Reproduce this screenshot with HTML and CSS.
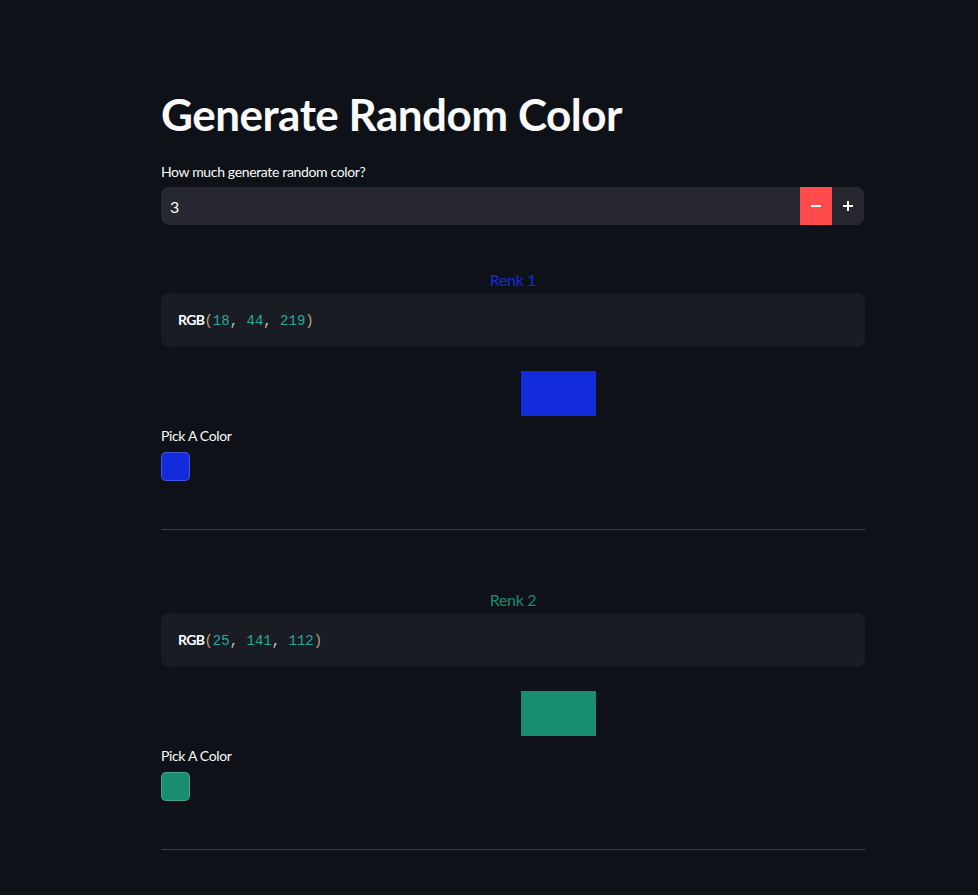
FILE: index.html
```html
<!DOCTYPE html>
<html lang="en">
<head>
<meta charset="utf-8">
<title>Generate Random Color</title>
<link rel="stylesheet" href="styles.css">
</head>
<body>
<main class="block">
  <h1 class="title">Generate Random Color</h1>
  <label class="label">How much generate random color?</label>
  <div class="number-input">
    <span class="number-value">3</span>
    <button class="step step-minus" aria-label="minus"><svg width="10" height="10" viewBox="0 0 10 10"><rect x="0" y="4" width="10" height="2" fill="#fff"/></svg></button>
    <button class="step step-plus" aria-label="plus"><svg width="10" height="10" viewBox="0 0 10 10"><rect x="0" y="4" width="10" height="2" fill="#fff"/><rect x="4" y="0" width="2" height="10" fill="#fff"/></svg></button>
  </div>

  <section class="item">
    <div class="renk renk-1">Renk 1</div>
    <pre class="code"><span class="fn">RGB</span><span class="paren">(</span><span class="num">18</span><span class="punc">, </span><span class="num">44</span><span class="punc">, </span><span class="num">219</span><span class="paren">)</span></pre>
    <div class="preview preview-1"></div>
    <div class="label pick-label">Pick A Color</div>
    <div class="swatch preview-1"></div>
    <hr class="divider">
  </section>

  <section class="item">
    <div class="renk renk-2">Renk 2</div>
    <pre class="code"><span class="fn">RGB</span><span class="paren">(</span><span class="num">25</span><span class="punc">, </span><span class="num">141</span><span class="punc">, </span><span class="num">112</span><span class="paren">)</span></pre>
    <div class="preview preview-2"></div>
    <div class="label pick-label">Pick A Color</div>
    <div class="swatch preview-2"></div>
    <hr class="divider">
  </section>
</main>
</body>
</html>
```

FILE: styles.css
```css
html, body {
  margin: 0;
  padding: 0;
  background: #0e1117;
  color: #fafafa;
  font-family: "Lato", "Noto Sans", sans-serif;
}

.block {
  width: 704px;
  margin-left: 161px;
  padding-top: 87px;
  display: flex;
  flex-direction: column;
}

.title {
  margin: 0;
  font-size: 44px;
  line-height: 54px;
  font-weight: 700;
  letter-spacing: -0.5px;
}

.label {
  display: block;
  font-size: 14px;
  line-height: 16px;
  margin-top: 23px;
  color: #fafafa;
  letter-spacing: -0.35px;
}

.number-input {
  margin-top: 7px;
  height: 38px;
  width: 703px;
  background: #262730;
  border-radius: 8px;
  display: flex;
  align-items: center;
  overflow: hidden;
}

.number-value {
  flex: 1;
  padding-left: 9px;
  font-size: 16px;
  color: #fafafa;
}

.step {
  width: 32px;
  height: 38px;
  border: 0;
  padding: 0;
  background: #262730;
  display: flex;
  align-items: center;
  justify-content: center;
}

.step-minus {
  background: #ff4b4b;
}

.item {
  display: flex;
  flex-direction: column;
}

.item:first-of-type {
  margin-top: 43px;
}

.renk {
  text-align: center;
  font-size: 16px;
  line-height: 24px;
  margin-top: 0;
  margin-bottom: 1px;
  letter-spacing: -0.3px;
}

.renk-1 { color: rgb(18, 44, 219); }
.renk-2 { color: rgb(25, 141, 112); }

.code {
  margin: 0;
  height: 54px;
  box-sizing: border-box;
  padding: 16px 17px;
  background: #1a1c24;
  border-radius: 8px;
  font-family: "Liberation Mono", "DejaVu Sans Mono", monospace;
  font-size: 14px;
  line-height: 22px;
  color: #fafafa;
}

.fn {
  font-family: "Lato", "Noto Sans", sans-serif;
  font-weight: 700;
  font-size: 14px;
  letter-spacing: -0.6px;
  color: #ffffff;
}

.paren { color: #b1a58a; }
.num { color: #2aa898; }
.punc { color: #c8c8c8; }

.preview {
  margin-top: 24px;
  margin-left: 360px;
  width: 75px;
  height: 45px;
}

.preview-1 { background: rgb(18, 44, 219); }
.preview-2 { background: rgb(25, 141, 112); }

.pick-label {
  margin-top: 12px;
}

.swatch {
  margin-top: 8px;
  width: 29px;
  height: 29px;
  box-sizing: border-box;
  border-radius: 5px;
  border: 1px solid rgba(255, 255, 255, 0.2);
}

.divider {
  margin: 48px 0 58px 0;
  border: 0;
  height: 1px;
  background: rgba(250, 250, 250, 0.2);
  width: 704px;
}
```
